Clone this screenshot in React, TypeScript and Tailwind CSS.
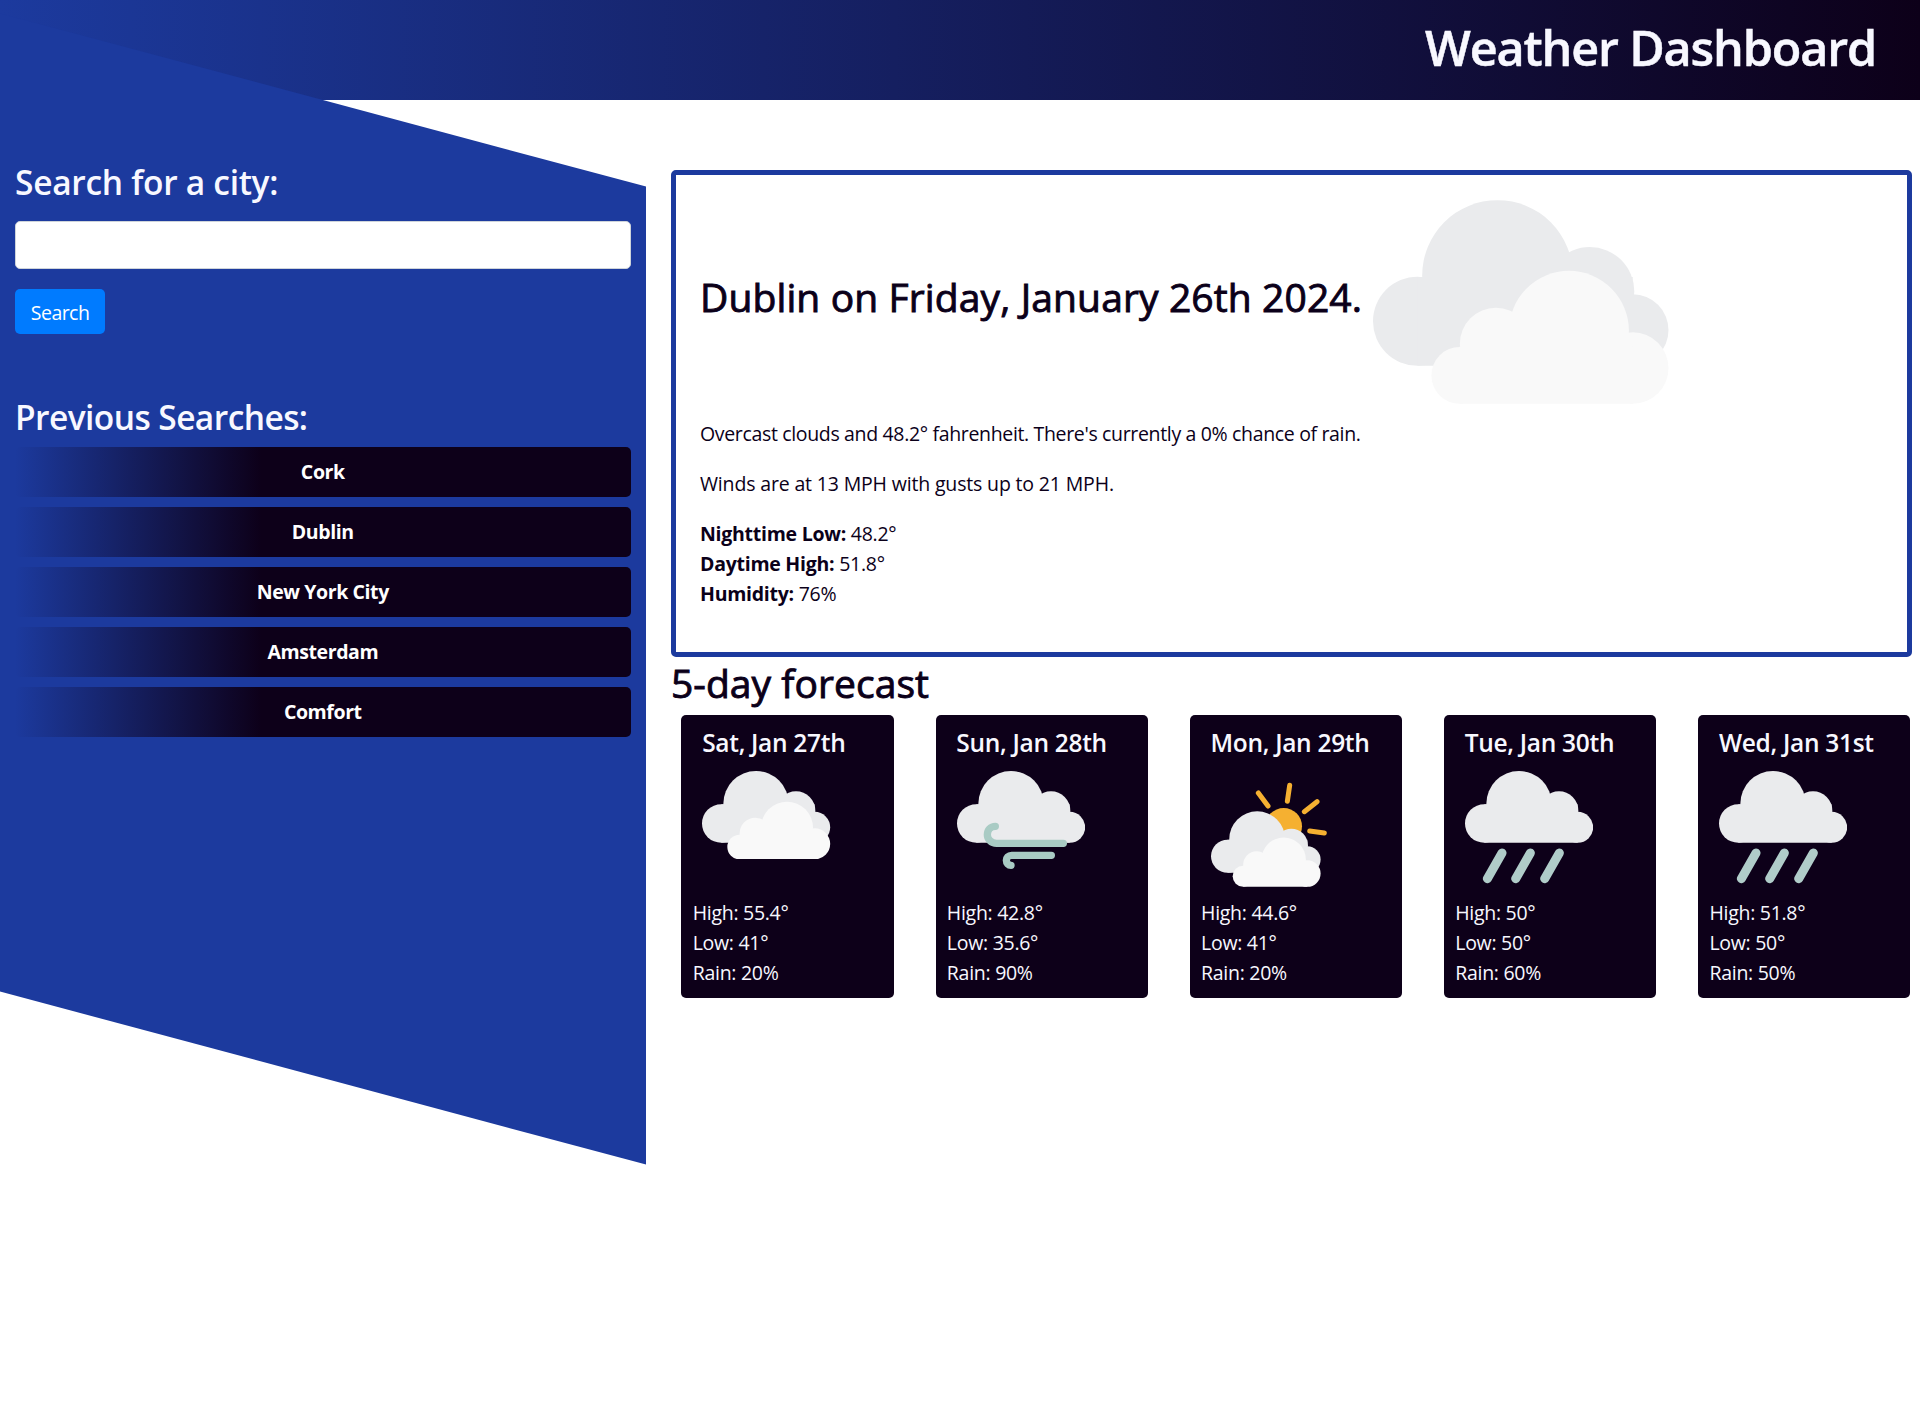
import React from "react";

type Kind = "cloudy" | "wind" | "sun" | "rain";

const searches = ["Cork", "Dublin", "New York City", "Amsterdam", "Comfort"];

const days: { title: string; icon: Kind; high: string; low: string; rain: string }[] = [
  { title: "Sat, Jan 27th", icon: "cloudy", high: "55.4°", low: "41°", rain: "20%" },
  { title: "Sun, Jan 28th", icon: "wind", high: "42.8°", low: "35.6°", rain: "90%" },
  { title: "Mon, Jan 29th", icon: "sun", high: "44.6°", low: "41°", rain: "20%" },
  { title: "Tue, Jan 30th", icon: "rain", high: "50°", low: "50°", rain: "60%" },
  { title: "Wed, Jan 31st", icon: "rain", high: "51.8°", low: "50°", rain: "50%" },
];

function BackCloud() {
  return (
    <g fill="#eaebed">
      <circle cx="58" cy="157.5" r="58" />
      <circle cx="162" cy="98" r="98" />
      <circle cx="282" cy="119" r="58" />
      <circle cx="338" cy="169" r="46.5" />
      <path d="M58 215.5V100H338V215.5Z" />
    </g>
  );
}

function FrontCloud() {
  return (
    <g fill="#f9f9f9">
      <circle cx="113" cy="228" r="37" />
      <circle cx="160" cy="187" r="47" />
      <circle cx="255" cy="170" r="78" />
      <circle cx="338" cy="218.5" r="46.5" />
      <path d="M113 265V190H338V265Z" />
    </g>
  );
}

function WeatherIcon({ kind, className }: { kind: Kind; className: string }) {
  return (
    <svg className={className} viewBox={kind === "cloudy" ? "0 0 384.5 265" : "0 0 384.5 350"} fill="none" strokeLinecap="round">
      {kind === "cloudy" && (
        <>
          <BackCloud />
          <FrontCloud />
        </>
      )}
      {kind === "wind" && (
        <>
          <BackCloud />
          <g stroke="#a9cbc4" strokeWidth="22">
            <path d="M319 217H119C102 217 91 204 91 191C91 177 101 166 115 166" />
            <path d="M283 253H164C154 253 148 260 148 268C148 277 154 283 162 283" />
          </g>
        </>
      )}
      {kind === "sun" && (
        <>
          <circle cx="218" cy="166" r="55" fill="#f5b031" />
          <path d="M236 43L229 91M142 66L171 105M318 92L280 122M296 180L340 186" stroke="#f5b031" strokeWidth="15" />
          <g transform="translate(0 121) scale(.855)">
            <BackCloud />
            <FrontCloud />
          </g>
        </>
      )}
      {kind === "rain" && (
        <>
          <BackCloud />
          <path d="M111 246L67 323M196 246L152 323M283 246L239 323" stroke="#b0ccc9" strokeWidth="27" />
        </>
      )}
    </svg>
  );
}

export default function App() {
  return (
    <div className="min-h-[1403px] overflow-hidden bg-white font-['Open_Sans',sans-serif] text-[19.5px] leading-[30px] text-[#0b0019]">
      <header className="flex h-[99.5px] items-center justify-end bg-linear-to-r/srgb from-[#1c3a9e] to-[#0d0019] pr-11 pb-[5px]">
        <h1 className="text-[48.5px] leading-[60px] font-semibold tracking-[-1.15px] text-[#f8f8ff] [-webkit-text-stroke:0.5px]">Weather Dashboard</h1>
      </header>
      <div className="flex items-start">
        <aside className="relative h-[978px] w-[645.6px] shrink-0">
          <div className="absolute inset-0 skew-y-[15deg] bg-[#1c3a9e]" />
          <div className="relative px-[15.1px] pt-[61.8px] text-[#f8f8ff]">
            <h2 className="text-[33.5px] leading-[42px] font-semibold tracking-[-0.3px]">Search for a city:</h2>
            <input aria-label="City" className="mt-[18.2px] block h-[47.5px] w-full rounded-[5px] border border-[#ced4da] bg-white px-4 text-gray-700" />
            <button className="mt-5 flex h-[45.5px] w-[90px] items-center justify-center rounded-[5px] bg-[#007bff] pt-0.5 tracking-[-0.55px] text-white">Search</button>
            <h2 className="mt-[62px] text-[33.5px] leading-[42px] font-semibold tracking-[-0.57px]">Previous Searches:</h2>
            <div className="mt-[8.3px] flex flex-col gap-[10px]">
              {searches.map((city) => (
                <button key={city} className="h-[50px] rounded-[5px] bg-linear-to-r/srgb from-[#1c3a9e] to-[#0d0019] to-40% font-bold tracking-[-0.4px] text-white">
                  {city}
                </button>
              ))}
            </div>
          </div>
        </aside>
        <main className="mr-[8.3px] ml-[25.4px] flex-1 pt-[70.5px]">
          <section className="h-[487.3px] rounded-[5px] border-5 border-[#1c3a9e] pt-[25px] pl-6">
            <div className="flex h-[204px] items-center">
              <h2 className="shrink-0 pb-[11px] text-[39px] leading-[48px] tracking-[0.12px] [-webkit-text-stroke:0.9px]">Dublin on Friday, January 26th 2024.</h2>
              <WeatherIcon kind="cloudy" className="ml-[11px] h-[204px] w-[295.5px]" />
            </div>
            <p className="mt-[15.2px] tracking-[-0.34px]">Overcast clouds and 48.2° fahrenheit. There's currently a 0% chance of rain.</p>
            <p className="mt-5 tracking-[-0.16px]">Winds are at 13 MPH with gusts up to 21 MPH.</p>
            <ul className="mt-5 tracking-[-0.26px]">
              <li><b>Nighttime Low:</b> 48.2°</li>
              <li><b>Daytime High:</b> 51.8°</li>
              <li><b>Humidity:</b> 76%</li>
            </ul>
          </section>
          <h2 className="mt-[2px] text-[39px] leading-[48px] tracking-[0.05px] [-webkit-text-stroke:0.9px]">5-day forecast</h2>
          <div className="mt-2 ml-[10.5px] flex gap-[42px]">
            {days.map((d) => (
              <article key={d.title} className="h-[282.4px] w-[212.2px] shrink-0 rounded-[5px] bg-[#0d0019] pt-[12.6px] text-[#f8f8ff]">
                <h3 className="ml-[20.7px] text-[24.5px] font-semibold tracking-[-0.3px] whitespace-nowrap">{d.title}</h3>
                <div className="mt-[12.8px] ml-[21px] h-[116.7px]">
                  <WeatherIcon kind={d.icon} className="w-[128.2px]" />
                </div>
                <ul className="mt-[11px] ml-[11.2px] tracking-[-0.28px]">
                  <li>High: {d.high}</li>
                  <li>Low: {d.low}</li>
                  <li>Rain: {d.rain}</li>
                </ul>
              </article>
            ))}
          </div>
        </main>
      </div>
    </div>
  );
}
